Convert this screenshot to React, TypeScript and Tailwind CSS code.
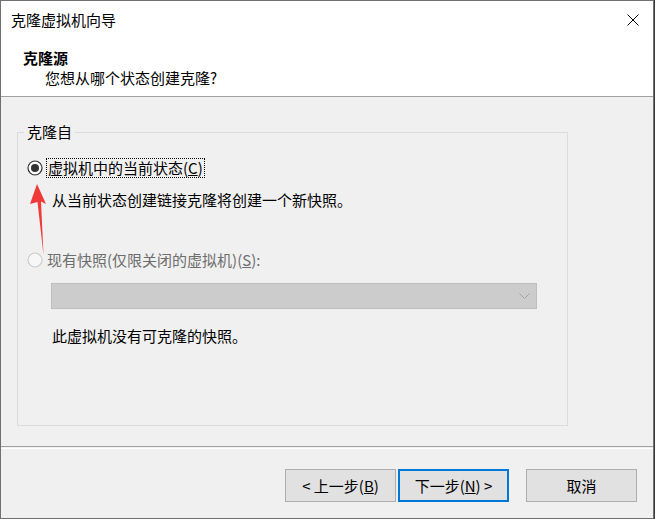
import React from "react";

const font = { fontFamily: '"Noto Sans CJK SC", "Noto Sans", sans-serif' };

function RadioChecked() {
  return (
    <svg width="16" height="16" viewBox="0 0 16 16" className="shrink-0">
      <circle cx="8" cy="8" r="7" fill="#ffffff" stroke="#333333" strokeWidth="1.2" />
      <circle cx="8" cy="8" r="4" fill="#333333" />
    </svg>
  );
}

function RadioDisabled() {
  return (
    <svg width="16" height="16" viewBox="0 0 16 16" className="shrink-0">
      <circle cx="8" cy="8" r="7" fill="#f7f7f7" stroke="#cccccc" strokeWidth="1.2" />
    </svg>
  );
}

export default function App() {
  return (
    <div className="w-[655px] h-[519px] bg-[#3a3a3a] text-[15px] leading-[20px] text-black" style={font}>
      <div className="relative w-[654px] h-[519px] border border-[#707070] flex flex-col bg-[#f0f0f0]">
        {/* header */}
        <div className="bg-white border-b border-[#a0a0a0] h-[96px] flex flex-col">
          <div className="h-[38px] flex items-center justify-between pl-[10px] pr-[14px]">
            <span>克隆虚拟机向导</span>
            <svg width="12" height="12" viewBox="0 0 12 12">
              <path d="M0.5 0.5 L11.5 11.5 M11.5 0.5 L0.5 11.5" stroke="#000" strokeWidth="1" />
            </svg>
          </div>
          <div className="pt-[9px] pl-[22px] font-bold">克隆源</div>
          <div className="pl-[44px]">您想从哪个状态创建克隆?</div>
        </div>

        {/* body */}
        <div className="h-[349px] pt-[35px] pl-[16px]">
          <div className="relative w-[551px] h-[294px] border border-[#dcdcdc] pt-[25px] pl-[9px]">
            <div className="absolute -top-[11px] left-[6px] px-[3px] bg-[#f0f0f0] leading-[20px]">克隆自</div>
            <div className="flex items-center h-[20px] gap-[3px]">
              <RadioChecked />
              <span className="border border-dotted border-black px-[1px] leading-[18px] h-[20px]">
                虚拟机中的当前状态(<span className="underline">C</span>)
              </span>
            </div>
            <div className="mt-[12px] pl-[25px]">从当前状态创建链接克隆将创建一个新快照。</div>
            <div className="mt-[40px] flex items-center h-[20px] gap-[4px] text-[#6d6d6d]">
              <RadioDisabled />
              <span>
                现有快照(仅限关闭的虚拟机)(<span className="underline">S</span>):
              </span>
            </div>
            <div className="mt-[13px] ml-[24px] w-[486px] h-[26px] bg-[#cccccc] border border-[#bfbfbf] flex items-center justify-end pr-[6px]">
              <svg width="11" height="6" viewBox="0 0 11 6">
                <path d="M0.5 0.5 L5.5 5.5 L10.5 0.5" fill="none" stroke="#a5a5a5" strokeWidth="1" />
              </svg>
            </div>
            <div className="mt-[17px] pl-[25px]">此虚拟机没有可克隆的快照。</div>
          </div>
        </div>

        {/* separator */}
        <div className="h-[3px] border-t border-[#a0a0a0] border-b border-b-white" />

        {/* footer */}
        <div className="flex-1 flex justify-end items-start pt-[20px] pr-[16px]">
          <button className="w-[111px] h-[33px] bg-[#e1e1e1] border border-[#adadad] flex items-center justify-center">
            &lt; 上一步(<span className="underline">B</span>)
          </button>
          <button className="ml-[2px] w-[111px] h-[33px] bg-[#e1e1e1] border-2 border-[#0078d7] flex items-center justify-center">
            下一步(<span className="underline">N</span>) &gt;
          </button>
          <button className="ml-[17px] w-[111px] h-[33px] bg-[#e1e1e1] border border-[#adadad] flex items-center justify-center">
            取消
          </button>
        </div>

        {/* red annotation arrow */}
        <svg className="absolute left-0 top-0 pointer-events-none" width="60" height="270" viewBox="0 0 60 270">
          <polygon points="36,183 45,203 40,200.5 42.5,254 36.5,201 29,203" fill="#f03a3a" />
        </svg>
      </div>
    </div>
  );
}
